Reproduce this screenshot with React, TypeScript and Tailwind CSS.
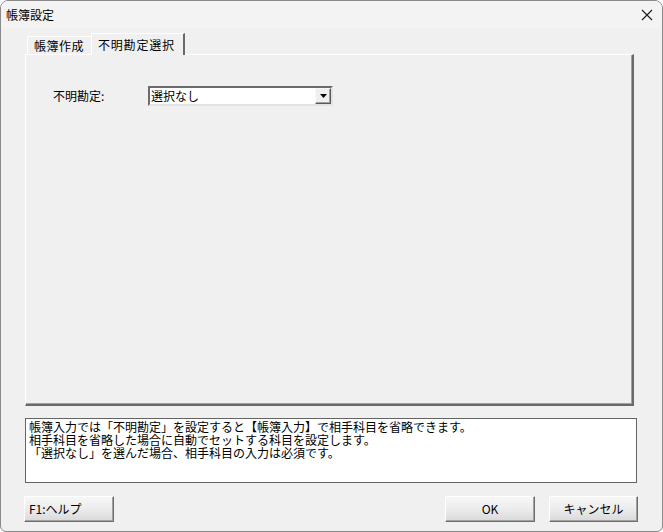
const lines = [
  "帳簿入力では「不明勘定」を設定すると【帳簿入力】で相手科目を省略できます。",
  "相手科目を省略した場合に自動でセットする科目を設定します。",
  "「選択なし」を選んだ場合、相手科目の入力は必須です。",
];

function Button({ label, left, width }: { label: string; left?: boolean; width: string }) {
  return (
    <button
      className={`${width} flex h-[26px] items-center border border-t-white border-l-white border-r-[#6e6e6e] border-b-[#6e6e6e] bg-gradient-to-b from-[#f7f7f7] via-[#ececec] to-[#d9d9d9] text-[12px] leading-none text-black shadow-[inset_-1px_-1px_0_#a0a0a0] ${
        left ? "justify-start pl-[4px]" : "justify-center"
      }`}
    >
      {label}
    </button>
  );
}

export default function App() {
  return (
    <div className="flex h-[532px] w-[663px] flex-col overflow-hidden rounded-t-[8px] rounded-b-[6px] border border-[#8a8a8a] bg-[#f0f0f0] font-['Noto_Sans_CJK_JP',sans-serif] text-black">
      {/* Title bar */}
      <div className="flex h-[27px] items-center justify-between bg-[#f3f3f3] pl-[5px] pr-[9px]">
        <span className="text-[12px] leading-none">帳簿設定</span>
        <svg width="12" height="12" viewBox="0 0 12 12">
          <path d="M1 1 L11 11 M11 1 L1 11" stroke="#1a1a1a" strokeWidth="1.1" fill="none" />
        </svg>
      </div>

      <div className="flex flex-col pl-[23px]">
        {/* Tabs */}
        <div className="mt-[5px] ml-[3px] flex items-end">
          <div className="flex h-[18px] items-center border-t border-l border-white pl-[6px] pr-[7px] text-[12px] leading-none tracking-[0.5px]">
            帳簿作成
          </div>
          <div className="relative z-10 -mb-px flex h-[22px] items-center border-t border-l border-white border-r-2 border-r-[#696969] bg-[#f0f0f0] pl-[6px] pr-[8px] text-[12px] leading-none tracking-[0.8px]">
            不明勘定選択
          </div>
        </div>

        {/* Panel */}
        <div className="ml-[1px] flex h-[352px] w-[609px] flex-col border-t border-l border-white border-r-2 border-b-2 border-r-[#696969] border-b-[#696969] shadow-[inset_-1px_-1px_0_#a0a0a0]">
          <div className="mt-[31px] flex items-center">
            <span className="ml-[27px] w-[95px] text-[12px] leading-none">不明勘定:</span>
            <div className="flex h-[20px] w-[185px] items-center border-2 border-t-[#6b6b6b] border-l-[#6b6b6b] border-r-[#e3e3e3] border-b-[#e3e3e3] bg-white">
              <span className="flex-1 pl-[1px] text-[12px] leading-none">選択なし</span>
              <div className="flex h-[16px] w-[16px] items-center justify-center border border-t-[#f8f8f8] border-l-[#f8f8f8] border-r-[#5a5a5a] border-b-[#5a5a5a] bg-[#f0f0f0] shadow-[inset_-1px_-1px_0_#a0a0a0]">
                <svg width="7" height="4" viewBox="0 0 7 4">
                  <path d="M0 0 H7 L3.5 4 Z" fill="#000" />
                </svg>
              </div>
            </div>
          </div>
        </div>

        {/* Description */}
        <div className="ml-[1px] mt-[12px] h-[65px] w-[612px] border border-[#646464] bg-white px-[3px] pt-[1px] text-[12px] leading-[13px]">
          {lines.map((l) => (
            <div key={l} className="whitespace-nowrap">
              {l}
            </div>
          ))}
        </div>

        {/* Buttons */}
        <div className="mt-[13px] flex w-[614px] items-center justify-between">
          <Button label="F1:ヘルプ" left width="w-[90px]" />
          <div className="flex gap-[14px]">
            <Button label="OK" width="w-[90px]" />
            <Button label="キャンセル" width="w-[89px]" />
          </div>
        </div>
      </div>
    </div>
  );
}
